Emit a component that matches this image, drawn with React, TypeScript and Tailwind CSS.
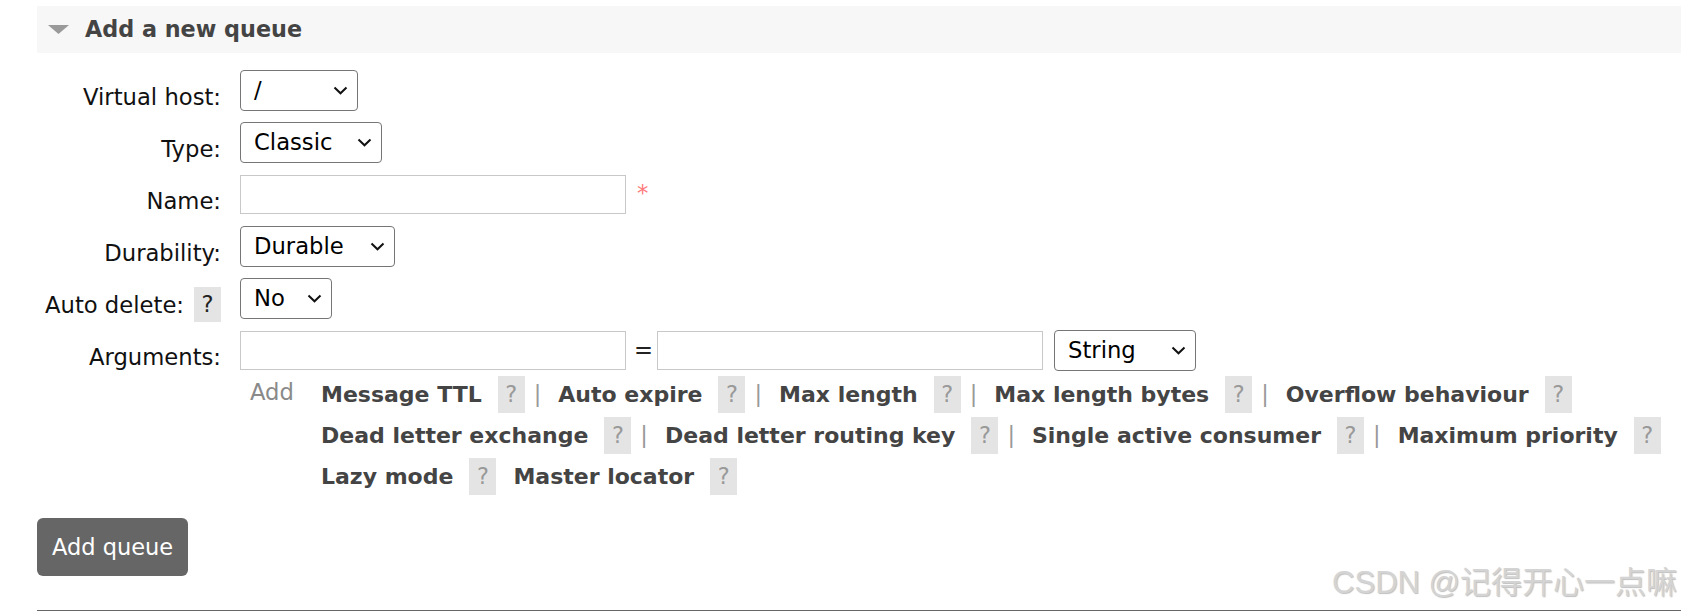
import React from "react";

function Chevron() {
  return (
    <svg width="15" height="9" viewBox="0 0 15 9" className="shrink-0">
      <polyline points="1.5,1.5 7.5,7.3 13.5,1.5" fill="none" stroke="#111" strokeWidth="2" />
    </svg>
  );
}

function Select({ value, w }: { value: string; w: string }) {
  return (
    <div className={`${w} h-[41px] border border-[#767676] rounded-[4px] flex items-center justify-between pl-[13px] pr-[9px] text-black bg-white`}>
      <span>{value}</span>
      <Chevron />
    </div>
  );
}

function Row({ label, help, children }: { label: string; help?: boolean; children: React.ReactNode }) {
  return (
    <div className="flex items-start h-[41px]">
      <div className="w-[203px] pr-[19px] flex justify-end items-start">
        <span className="pt-[14px] leading-[26px] text-[#111]">{label}</span>
        {help && (
          <span className="ml-[10px] mt-[9px] w-[27px] h-[35px] bg-[#e4e4e4] flex items-center justify-center text-[#222]">?</span>
        )}
      </div>
      <div className="flex items-center h-[41px]">{children}</div>
    </div>
  );
}

function Help() {
  return (
    <span className="ml-[16px] w-[27px] h-[37px] bg-[#e4e4e4] flex items-center justify-center text-[#999] font-normal text-[22.5px]">?</span>
  );
}

function Sep() {
  return <span className="ml-[9px] mr-[17px] text-[#999] font-normal text-[22.5px]">|</span>;
}

function Item({ t, sep }: { t: string; sep?: boolean }) {
  return (
    <>
      <span className="font-bold text-[#444] text-[22px]">{t}</span>
      <Help />
      {sep && <Sep />}
    </>
  );
}

export default function App() {
  return (
    <div className="w-[1681px] h-[612px] bg-white relative overflow-hidden font-['DejaVu_Sans',sans-serif] text-[22.7px]">
      <div className="ml-[37px] pt-[6px]">
        <div className="h-[47px] bg-[#f7f7f7] flex items-center">
          <svg width="21" height="9" viewBox="0 0 21 9" className="ml-[11px]">
            <polygon points="0,0 21,0 10.5,9" fill="#9a9a9a" />
          </svg>
          <span className="ml-[16px] font-bold text-[#444] text-[22.3px]">Add a new queue</span>
        </div>

        <div className="mt-[17px] flex flex-col gap-[11px]">
          <Row label="Virtual host:">
            <Select value="/" w="w-[118px]" />
          </Row>
          <Row label="Type:">
            <Select value="Classic" w="w-[142px]" />
          </Row>
          <Row label="Name:">
            <div className="w-[386px] h-[39px] border border-[#c8c8c8]" />
            <span className="ml-[11px] -mt-[2px] text-[#ff7b7b]">*</span>
          </Row>
          <Row label="Durability:">
            <Select value="Durable" w="w-[155px]" />
          </Row>
          <Row label="Auto delete:" help>
            <Select value="No" w="w-[92px]" />
          </Row>
          <Row label="Arguments:">
            <div className="w-[386px] h-[39px] border border-[#c8c8c8]" />
            <span className="ml-[8px] text-[#222]">=</span>
            <div className="ml-[4px] w-[386px] h-[39px] border border-[#c8c8c8]" />
            <div className="ml-[11px]">
              <Select value="String" w="w-[142px]" />
            </div>
          </Row>
        </div>

        <div className="mt-[3px] ml-[213px] flex">
          <div className="w-[71px] h-[41px] flex items-center">
            <span className="text-[#8a8a8a] -mt-[5px]">Add</span>
          </div>
          <div className="flex flex-col">
            <div className="h-[41px] flex items-center">
              <Item t="Message TTL" sep />
              <Item t="Auto expire" sep />
              <Item t="Max length" sep />
              <Item t="Max length bytes" sep />
              <Item t="Overflow behaviour" />
            </div>
            <div className="h-[41px] flex items-center">
              <Item t="Dead letter exchange" sep />
              <Item t="Dead letter routing key" sep />
              <Item t="Single active consumer" sep />
              <Item t="Maximum priority" />
            </div>
            <div className="h-[41px] flex items-center">
              <Item t="Lazy mode" />
              <span className="ml-[17px]" />
              <Item t="Master locator" />
            </div>
          </div>
        </div>

        <button className="mt-[21px] h-[58px] px-[15px] rounded-[6px] bg-[#666] text-white text-[22.5px] leading-none">
          Add queue
        </button>

        <div className="mt-[34px] h-px bg-[#666]" />
      </div>

      <div className="absolute right-[4px] top-[567px] leading-none text-[31px] text-[#d4d4d4] [text-shadow:1px_1px_1px_rgba(0,0,0,0.25)] font-['Liberation_Sans','Noto_Sans_CJK_SC',sans-serif] whitespace-nowrap">
        CSDN @记得开心一点嘛
      </div>
    </div>
  );
}
